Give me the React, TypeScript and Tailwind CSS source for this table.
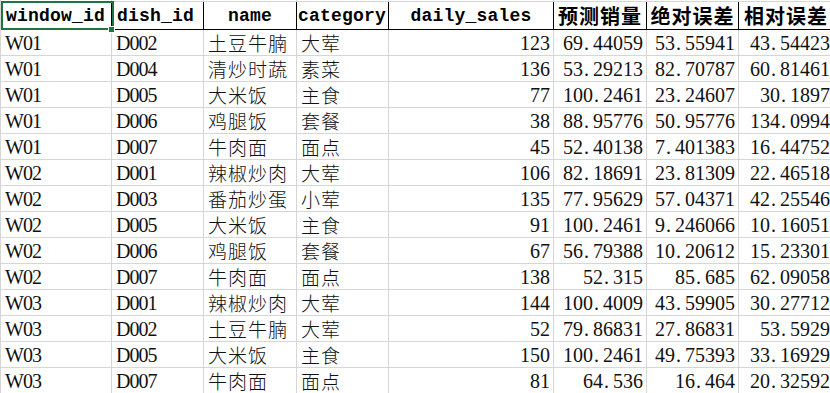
import React from 'react';

const cols = [111, 92, 93, 92, 165, 93, 92, 95];

const header = [
  { t: 'window_id', a: 'justify-start px-[5px]', cjk: false },
  { t: 'dish_id', a: 'justify-start px-[5px]', cjk: false },
  { t: 'name', a: 'justify-center px-[5px]', cjk: false },
  { t: 'category', a: 'justify-start pl-[1px]', cjk: false },
  { t: 'daily_sales', a: 'justify-center px-[5px]', cjk: false },
  { t: '预测销量', a: 'justify-center px-[2px]', cjk: true },
  { t: '绝对误差', a: 'justify-center px-[2px]', cjk: true },
  { t: '相对误差', a: 'justify-center px-[2px]', cjk: true },
];

const rows = [
  ['W01', 'D002', '土豆牛腩', '大荤', '123', '69.44059', '53.55941', '43.54423'],
  ['W01', 'D004', '清炒时蔬', '素菜', '136', '53.29213', '82.70787', '60.81461'],
  ['W01', 'D005', '大米饭', '主食', '77', '100.2461', '23.24607', '30.1897'],
  ['W01', 'D006', '鸡腿饭', '套餐', '38', '88.95776', '50.95776', '134.0994'],
  ['W01', 'D007', '牛肉面', '面点', '45', '52.40138', '7.401383', '16.44752'],
  ['W02', 'D001', '辣椒炒肉', '大荤', '106', '82.18691', '23.81309', '22.46518'],
  ['W02', 'D003', '番茄炒蛋', '小荤', '135', '77.95629', '57.04371', '42.25546'],
  ['W02', 'D005', '大米饭', '主食', '91', '100.2461', '9.246066', '10.16051'],
  ['W02', 'D006', '鸡腿饭', '套餐', '67', '56.79388', '10.20612', '15.23301'],
  ['W02', 'D007', '牛肉面', '面点', '138', '52.315', '85.685', '62.09058'],
  ['W03', 'D001', '辣椒炒肉', '大荤', '144', '100.4009', '43.59905', '30.27712'],
  ['W03', 'D002', '土豆牛腩', '大荤', '52', '79.86831', '27.86831', '53.5929'],
  ['W03', 'D005', '大米饭', '主食', '150', '100.2461', '49.75393', '33.16929'],
  ['W03', 'D007', '牛肉面', '面点', '81', '64.536', '16.464', '20.32592'],
];

const gridCols = 'grid grid-cols-[111px_92px_93px_92px_165px_93px_92px_95px]';

// SimSun-style number: the decimal point takes a full half-width cell
function Num({ v }: { v: string }) {
  const [a, b] = v.split('.');
  return (
    <span>
      {a}
      {b !== undefined && (
        <>
          <span className="inline-block w-[10px] pl-[1px]">.</span>
          {b}
        </>
      )}
    </span>
  );
}

export default function App() {
  return (
    <div className="relative w-[830px] h-[393px] overflow-hidden bg-white border-l border-[#d6d6d6] text-[#111]">
      {/* strip of the row above */}
      <div className={`${gridCols} h-[2px] border-b border-[#d6d6d6]`}>
        {cols.map((_, i) => (
          <div key={i} className="border-r border-[#d6d6d6]" />
        ))}
      </div>

      {/* HEADER */}
      <div className={`${gridCols} h-[28px] border-b border-black`}>
        {header.map((h, i) => (
          <div
            key={i}
            className={`flex items-center ${h.a} border-r border-black font-bold whitespace-nowrap overflow-hidden leading-[24px] text-black ${
              h.cjk
                ? "text-[20px] tracking-[1px] font-['Noto_Sans_CJK_SC',sans-serif]"
                : "text-[18px] tracking-[0.2px] font-['Liberation_Mono',monospace]"
            }`}
          >
            {h.t}
          </div>
        ))}
      </div>

      {/* DATA */}
      {rows.map((r, ri) => (
        <div key={ri} className={`${gridCols} h-[26px] border-b border-[#d6d6d6]`}>
          {r.map((v, ci) => (
            <div
              key={ci}
              className={`flex items-center border-r border-[#d6d6d6] whitespace-nowrap overflow-hidden leading-[22px] ${
                ci >= 4 ? 'justify-end pr-[3px]' : 'justify-start pl-[4px]'
              } ${
                ci === 2 || ci === 3
                  ? "text-[19px] tracking-[1px] font-['Noto_Sans_CJK_SC',sans-serif] font-light"
                  : ci < 2
                  ? "text-[20px] tracking-[-1px] font-['Liberation_Serif',serif]"
                  : "text-[20px] font-['Liberation_Serif',serif]"
              }`}
            >
              {ci >= 5 ? <Num v={v} /> : v}
            </div>
          ))}
        </div>
      ))}

      {/* selected cell */}
      <div className="absolute left-0 top-[1px] w-[113px] h-[29px] border-2 border-[#217346] pointer-events-none" />
      <div className="absolute left-[107px] top-[26px] w-[7px] h-[7px] bg-[#217346] border border-white" />
    </div>
  );
}
